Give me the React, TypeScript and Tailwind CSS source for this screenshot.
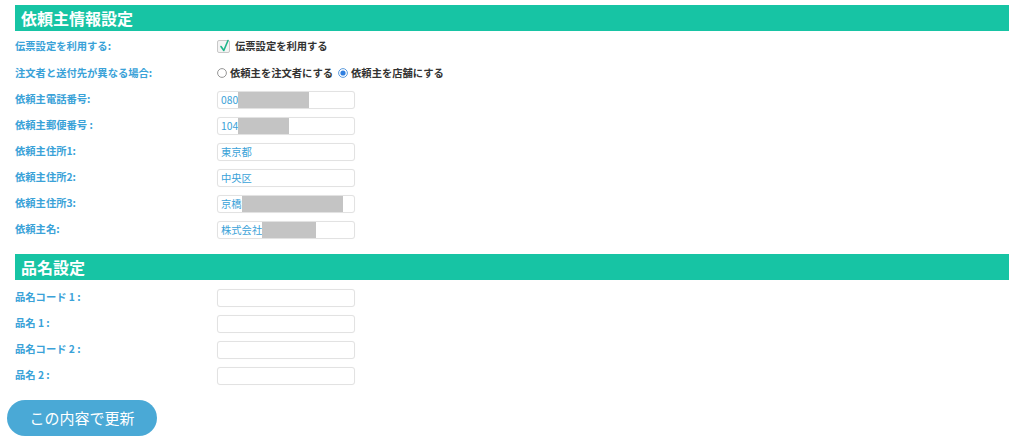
const font = { fontFamily: '"Noto Sans CJK JP", "Noto Sans", sans-serif' };

function SectionHeader({ title }: { title: string }) {
  return (
    <div className="ml-[15px] mr-[15px] h-[26px] bg-[#17c4a4] px-[6px] flex items-center">
      <h2 className="text-[16px] font-bold text-white leading-none">{title}</h2>
    </div>
  );
}

function Redact({ w }: { w: number }) {
  return <span className="inline-block h-[16px] bg-[#c4c4c4]" style={{ width: w }} />;
}

function InputRow({
  label,
  value,
  redact,
}: {
  label: string;
  value?: string;
  redact?: number;
}) {
  return (
    <div className="flex items-start h-[26px] pt-[5px]">
      <div className="w-[217px] shrink-0 pl-[15px] text-[10.3px] leading-[15px] font-bold text-[#3aa2d8]">
        {label}
      </div>
      <div className="w-[138px] h-[18px] border border-[#e2e2e2] rounded-[3px] bg-white flex items-center pl-[3px] text-[10.3px] text-[#3aa2d8] overflow-hidden shadow-[0_0_1px_rgba(0,0,0,0.05)]">
        {value}
        {redact ? <Redact w={redact} /> : null}
      </div>
    </div>
  );
}

function Radio({ checked }: { checked?: boolean }) {
  return (
    <svg width="10" height="10" viewBox="0 0 10 10" className="shrink-0">
      <circle cx="5" cy="5" r="4.4" fill="white" stroke={checked ? "#4a8fd8" : "#8a8a8a"} strokeWidth="0.9" />
      {checked ? <circle cx="5" cy="5" r="2.6" fill="#2f7fe0" /> : null}
    </svg>
  );
}

export default function App() {
  return (
    <div className="w-[1024px] h-[440px] bg-white overflow-hidden pt-[5px]" style={font}>
      <SectionHeader title="依頼主情報設定" />

      <div className="mt-[2px]">
        <div className="flex items-center h-[26px]">
          <div className="w-[217px] shrink-0 pl-[15px] text-[10.3px] font-bold text-[#3aa2d8]">伝票設定を利用する:</div>
          <label className="flex items-center gap-[5px] text-[10.3px] font-bold text-[#333]">
            <span className="relative w-[13px] h-[13px] border border-[#c8c8c8] rounded-[2px] bg-[#f4f4f4]">
              <svg width="13" height="14" viewBox="0 0 13 14" className="absolute left-[0px] top-[-3px]">
                <path d="M3 8.5 L5.8 12.5 L10 2.5" fill="none" stroke="#1eb58a" strokeWidth="1.6" strokeLinecap="round" strokeLinejoin="round" />
              </svg>
            </span>
            伝票設定を利用する
          </label>
        </div>

        <div className="flex items-center h-[27px]">
          <div className="w-[217px] shrink-0 pl-[15px] text-[10.3px] font-bold text-[#3aa2d8]">注文者と送付先が異なる場合:</div>
          <div className="flex items-center text-[10.3px] font-bold text-[#333]">
            <Radio />
            <span className="ml-[3px]">依頼主を注文者にする</span>
            <span className="ml-[5px]"><Radio checked /></span>
            <span className="ml-[3px]">依頼主を店舗にする</span>
          </div>
        </div>

        <InputRow label="依頼主電話番号:" value="080" redact={71} />
        <InputRow label="依頼主郵便番号 :" value="104" redact={51} />
        <InputRow label="依頼主住所1:" value="東京都" />
        <InputRow label="依頼主住所2:" value="中央区" />
        <InputRow label="依頼主住所3:" value="京橋" redact={101} />
        <InputRow label="依頼主名:" value="株式会社" redact={54} />
      </div>

      <div className="mt-[12px]">
        <SectionHeader title="品名設定" />
      </div>

      <div className="mt-[4px]">
        <InputRow label="品名コード 1 :" />
        <InputRow label="品名 1 :" />
        <InputRow label="品名コード 2 :" />
        <InputRow label="品名 2 :" />
      </div>

      <button className="mt-[12px] ml-[7px] w-[150px] h-[36px] rounded-full bg-[#4aa9d6] text-white text-[15px] flex items-center justify-center">
        この内容で更新
      </button>
    </div>
  );
}
